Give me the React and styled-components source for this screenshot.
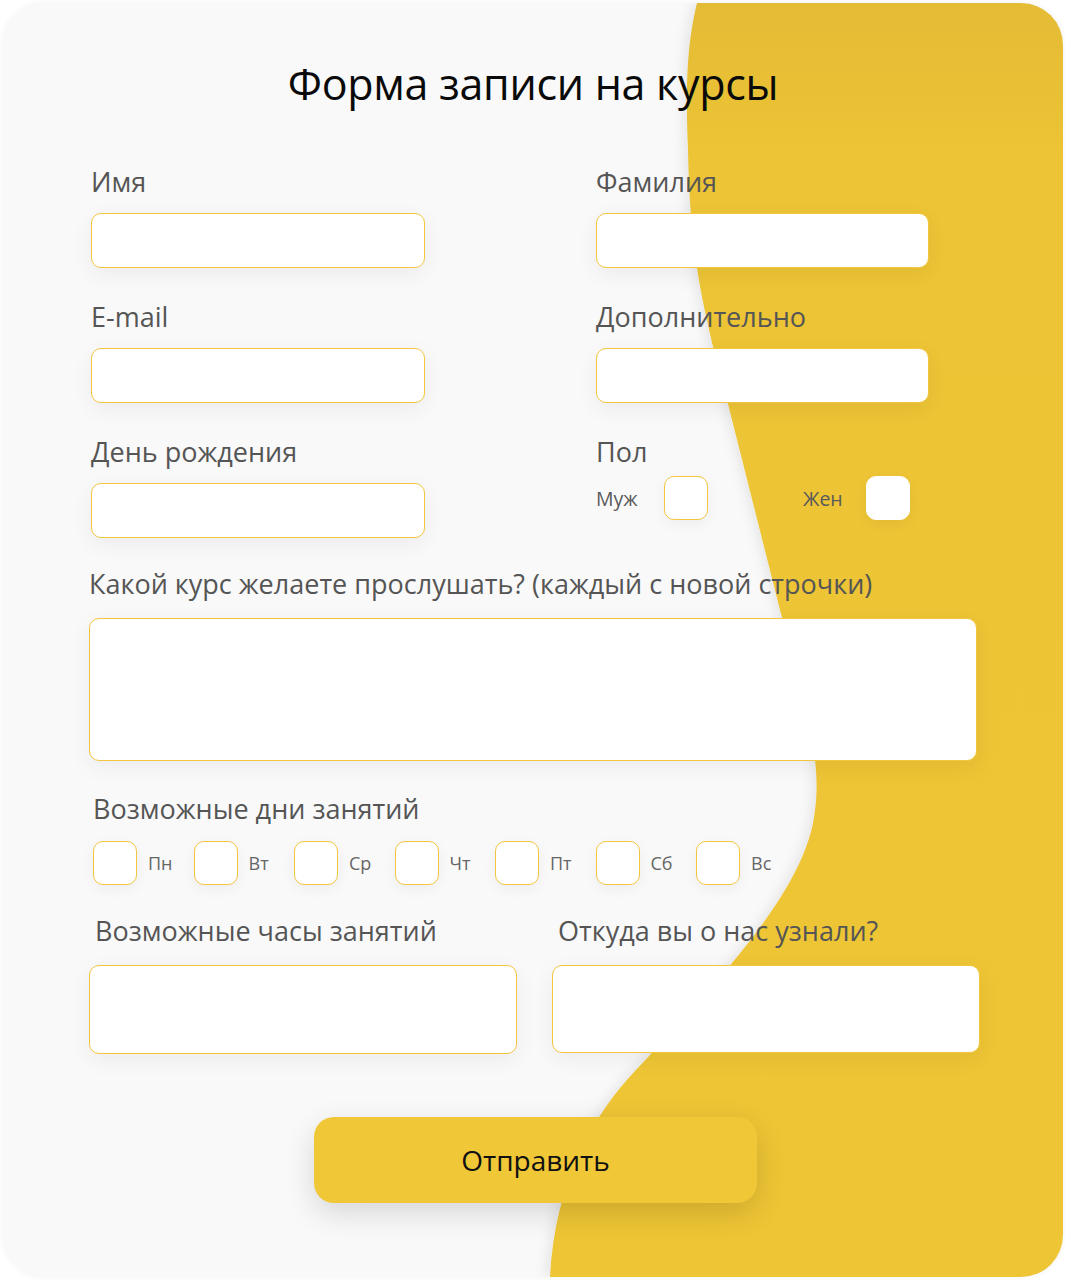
import React from "react";
import styled, { createGlobalStyle } from "styled-components";

const Global = createGlobalStyle`
  html, body { margin: 0; padding: 0; background: #ffffff; }
  body { font-family: "Open Sans", "Noto Sans", sans-serif; }
  * { box-sizing: border-box; }
`;

const Card = styled.form`
  position: relative;
  width: 1060px;
  height: 1274px;
  margin: 3px;
  border-radius: 42px;
  background: #f9f9f9;
  overflow: hidden;
  box-shadow: 0 0 6px rgba(0, 0, 0, 0.06);
`;

const Wave = styled.svg`
  position: absolute;
  inset: 0;
  width: 100%;
  height: 100%;
  z-index: 0;
`;

const Content = styled.div`
  position: relative;
  z-index: 1;
  padding-top: 56px;
`;

const Title = styled.h1`
  margin: 0;
  text-align: center;
  font-family: "Open Sans", sans-serif;
  font-weight: 400;
  font-size: 43px;
  line-height: 50px;
  color: #0a0a0a;
  letter-spacing: -0.3px;
`;

const Grid = styled.div`
  display: grid;
  grid-template-columns: 334px 333px;
  column-gap: 171px;
  row-gap: 33px;
  padding-left: 88px;
  margin-top: 57px;
`;

const Field = styled.div`
  display: flex;
  flex-direction: column;
`;

const Label = styled.label`
  font-family: "Open Sans", sans-serif;
  font-size: 27px;
  line-height: 32px;
  color: #555555;
  margin-bottom: ${(p) => p.$gap ?? 15}px;
  margin-left: ${(p) => p.$shift || 0}px;
  white-space: nowrap;
`;

const Input = styled.input`
  width: ${(p) => p.$w}px;
  height: ${(p) => p.$h}px;
  border: 1.5px solid #f2c63e;
  border-radius: 10px;
  background: #ffffff;
  box-shadow: 0 6px 22px rgba(0, 0, 0, 0.06);
  outline: none;
  padding: 0 14px;
  font-size: 20px;
`;

const Area = styled.textarea`
  display: block;
  width: 888px;
  height: 143px;
  border: 1.5px solid #f2c63e;
  border-radius: 10px;
  background: #ffffff;
  box-shadow: 0 6px 22px rgba(0, 0, 0, 0.06);
  outline: none;
  resize: none;
`;

const Section = styled.div`
  padding-left: ${(p) => p.$left}px;
  margin-top: ${(p) => p.$top}px;
`;

const GenderRow = styled.div`
  display: flex;
  align-items: center;
`;

const SmallText = styled.span`
  font-family: "Open Sans", sans-serif;
  font-size: 19.5px;
  color: #5a5a5a;
  width: ${(p) => p.$w}px;
  flex: none;
`;

const Box = styled.span`
  display: inline-block;
  width: 44px;
  height: 44px;
  flex: none;
  border: 1.5px solid ${(p) => (p.$plain ? "#ffffff" : "#f2c63e")};
  border-radius: 10px;
  background: #ffffff;
  box-shadow: 0 4px 14px rgba(0, 0, 0, 0.05);
  margin-right: ${(p) => p.$mr || 0}px;
`;

const Days = styled.div`
  display: flex;
  align-items: center;
`;

const Day = styled.div`
  display: flex;
  align-items: center;
  width: 100.5px;
  flex: none;
`;

const DayName = styled.span`
  font-family: "Open Sans", sans-serif;
  font-size: 18px;
  color: #666666;
  margin-left: 11px;
`;

const Bottom = styled.div`
  display: grid;
  grid-template-columns: 428px 428px;
  column-gap: 35px;
  padding-left: 86px;
  margin-top: 30px;
`;

const Button = styled.button`
  display: block;
  margin: 63px 0 0 311px;
  width: 443px;
  height: 86px;
  border: none;
  border-radius: 20px;
  background: #f0c737;
  box-shadow: 0 10px 30px rgba(0, 0, 0, 0.14);
  font-family: "Open Sans", sans-serif;
  font-weight: 500;
  font-size: 28px;
  color: #111111;
  cursor: pointer;
`;

const days = ["Пн", "Вт", "Ср", "Чт", "Пт", "Сб", "Вс"];

export default function App() {
  return (
    <>
      <Global />
      <Card onSubmit={(e) => e.preventDefault()}>
        <Wave viewBox="0 0 1060 1274" preserveAspectRatio="none">
          <defs>
            <linearGradient id="yg" x1="0" y1="0" x2="0" y2="1">
              <stop offset="0" stopColor="#e4bb36" />
              <stop offset="0.12" stopColor="#ecc436" />
              <stop offset="1" stopColor="#eec536" />
            </linearGradient>
            <filter id="sh" x="-20%" y="-20%" width="140%" height="140%">
              <feDropShadow dx="-4" dy="0" stdDeviation="6" floodColor="#000" floodOpacity="0.08" />
            </filter>
          </defs>
          <path
            filter="url(#sh)"
            fill="url(#yg)"
            d="M 694 0 C 685 37, 682 77, 685 147 C 687 247, 697 297, 724 397 L 777 607 C 802 697, 819 757, 812 807 C 805 877, 737 957, 632 1068 C 592 1110, 552 1177, 547 1274 L 1060 1274 L 1060 0 Z"
          />
        </Wave>
        <Content>
          <Title>Форма записи на курсы</Title>
          <Grid>
            <Field>
              <Label>Имя</Label>
              <Input $w={334} $h={55} />
            </Field>
            <Field>
              <Label>Фамилия</Label>
              <Input $w={333} $h={55} />
            </Field>
            <Field>
              <Label>E-mail</Label>
              <Input $w={334} $h={55} />
            </Field>
            <Field>
              <Label>Дополнительно</Label>
              <Input $w={333} $h={55} />
            </Field>
            <Field>
              <Label>День рождения</Label>
              <Input $w={334} $h={55} />
            </Field>
            <Field>
              <Label $gap={8}>Пол</Label>
              <GenderRow>
                <SmallText $w={68}>Муж</SmallText>
                <Box $mr={95} />
                <SmallText $w={63}>Жен</SmallText>
                <Box $plain />
              </GenderRow>
            </Field>
          </Grid>
          <Section $left={86} $top={30}>
            <Label as="div" $gap={18}>Какой курс желаете прослушать? (каждый с новой строчки)</Label>
            <Area />
          </Section>
          <Section $left={90} $top={32}>
            <Label as="div" $gap={16}>Возможные дни занятий</Label>
            <Days>
              {days.map((d) => (
                <Day key={d}>
                  <Box />
                  <DayName>{d}</DayName>
                </Day>
              ))}
            </Days>
          </Section>
          <Bottom>
            <Field>
              <Label $shift={6} $gap={18}>Возможные часы занятий</Label>
              <Input $w={428} $h={89} />
            </Field>
            <Field>
              <Label $shift={6} $gap={18}>Откуда вы о нас узнали?</Label>
              <Input $w={428} $h={88} />
            </Field>
          </Bottom>
          <Button type="submit">Отправить</Button>
        </Content>
      </Card>
    </>
  );
}
